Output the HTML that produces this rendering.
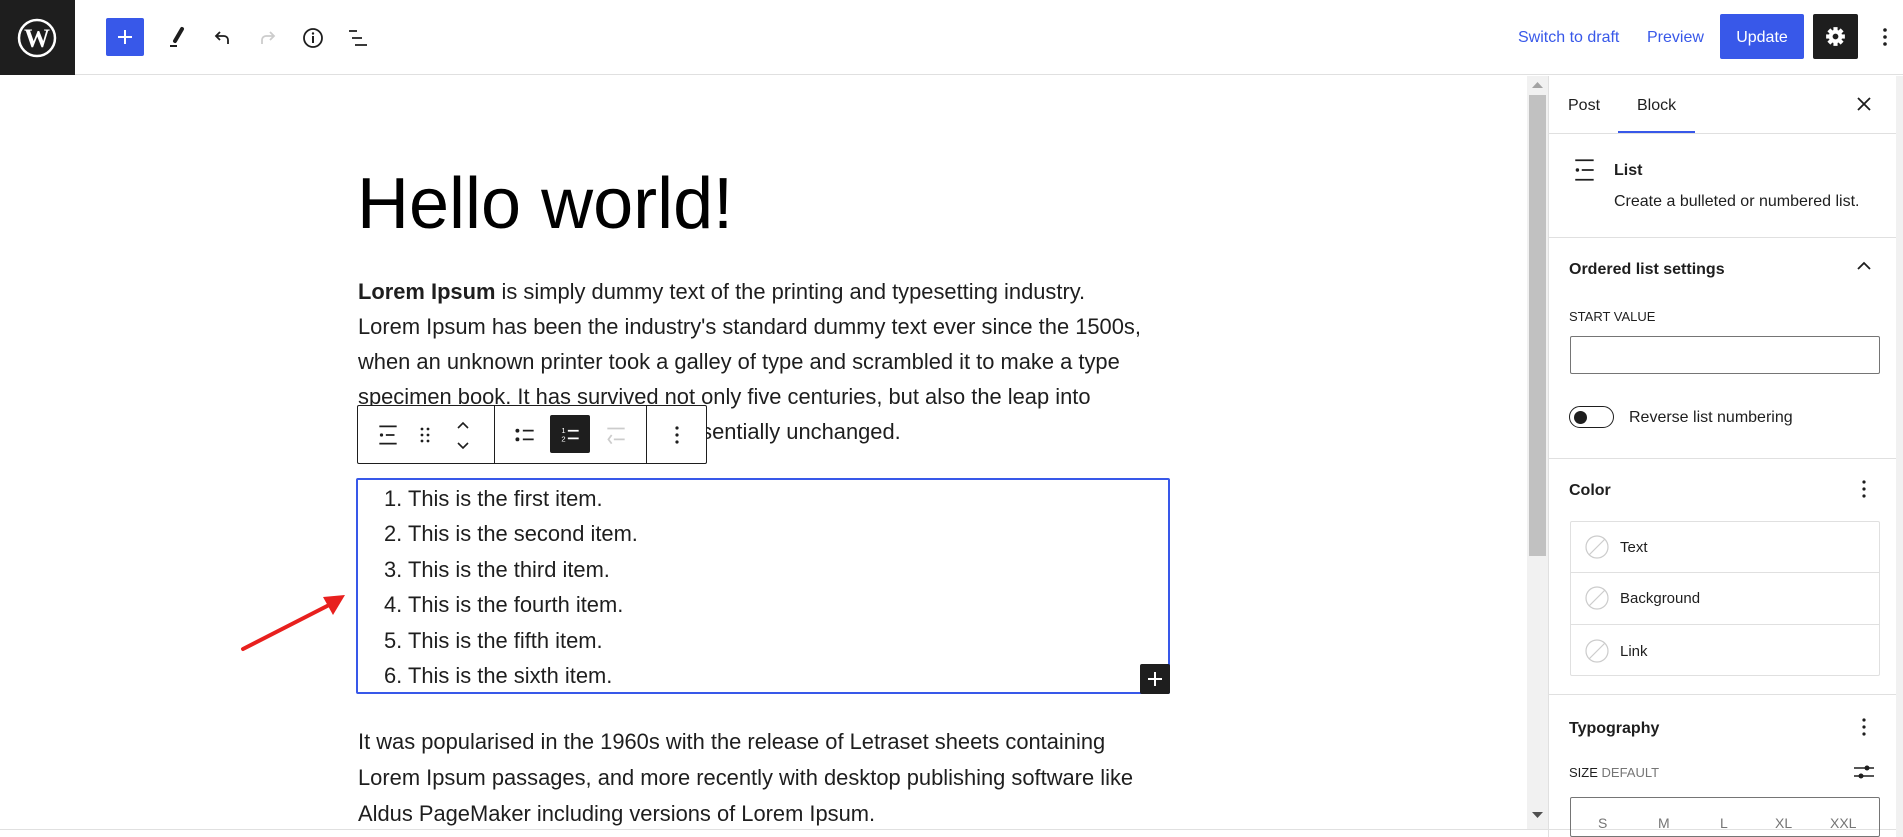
<!DOCTYPE html>
<html><head><meta charset="utf-8"><style>
*{margin:0;padding:0;box-sizing:border-box}
body{width:1903px;height:837px;overflow:hidden;background:#fff;font-family:"Liberation Sans",sans-serif;color:#1e1e1e;position:relative}
.a{position:absolute;white-space:nowrap}
.p{font-size:21.9px;line-height:35px;color:#1e1e1e}
.sb{font-size:16px}
</style></head><body>
<!-- header -->
<div class="a" style="left:0;top:0;width:1903px;height:75px;border-bottom:1px solid #e0e0e0"></div>
<div class="a" style="left:0;top:0;width:75px;height:75px;background:#1e1e1e"></div>
<svg class="a" style="left:17px;top:18px" width="40" height="40" viewBox="0 0 40 40"><circle cx="20" cy="20" r="18" fill="none" stroke="#fff" stroke-width="2.5"/><text x="20" y="29" text-anchor="middle" font-family="Liberation Serif" font-weight="bold" font-size="26" fill="#fff">W</text></svg>
<div class="a" style="left:106px;top:18px;width:38px;height:38px;background:#3858e9;border-radius:2px"></div>
<svg class="a" style="left:113px;top:25px" width="24" height="24" viewBox="0 0 24 24"><path d="M12 5v14M5 12h14" stroke="#fff" stroke-width="2"/></svg>
<svg class="a" style="left:165px;top:26px" width="24" height="24" viewBox="0 0 24 24"><path d="M17 3L10 15" stroke="#1e1e1e" stroke-width="4" stroke-linecap="round"/><path d="M5 20h7" stroke="#1e1e1e" stroke-width="2"/></svg>
<svg class="a" style="left:210px;top:26px" width="24" height="24" viewBox="0 0 24 24"><path d="M18 18v-4a4 4 0 0 0-4-4H6M10 6L6 10l4 4" fill="none" stroke="#1e1e1e" stroke-width="1.8"/></svg>
<svg class="a" style="left:256px;top:26px" width="24" height="24" viewBox="0 0 24 24"><path d="M6 18v-4a4 4 0 0 1 4-4h8M14 6l4 4-4 4" fill="none" stroke="#ccc" stroke-width="1.8"/></svg>
<svg class="a" style="left:301px;top:26px" width="24" height="24" viewBox="0 0 24 24"><circle cx="12" cy="12" r="9" fill="none" stroke="#1e1e1e" stroke-width="1.8"/><path d="M12 10v7" stroke="#1e1e1e" stroke-width="2"/><circle cx="12" cy="7.5" r="1.2" fill="#1e1e1e"/></svg>
<svg class="a" style="left:346px;top:26px" width="24" height="24" viewBox="0 0 24 24"><path d="M3 5h8M6 12h10M9 19h12" stroke="#1e1e1e" stroke-width="1.8"/></svg>
<div class="a" style="left:1518px;top:29px;font-size:16px;color:#3858e9">Switch to draft</div>
<div class="a" style="left:1647px;top:29px;font-size:16px;color:#3858e9">Preview</div>
<div class="a" style="left:1720px;top:14px;width:84px;height:45px;background:#3858e9;border-radius:2px;color:#fff;font-size:16px;text-align:center;line-height:47px">Update</div>
<div class="a" style="left:1813px;top:14px;width:45px;height:45px;background:#1e1e1e;border-radius:2px"></div>
<svg class="a" style="left:1823px;top:24px" width="25" height="25" viewBox="0 0 24 24"><g fill="#fff"><circle cx="12" cy="12" r="6.5"/><rect x="10" y="3" width="4" height="18"/><rect x="3" y="10" width="18" height="4"/><rect x="10" y="3" width="4" height="18" transform="rotate(45 12 12)"/><rect x="10" y="3" width="4" height="18" transform="rotate(-45 12 12)"/></g><circle cx="12" cy="12" r="2.8" fill="#1e1e1e"/></svg>
<svg class="a" style="left:1875px;top:25px" width="20" height="24" viewBox="0 0 20 24"><g fill="#1e1e1e"><circle cx="10" cy="5" r="1.8"/><circle cx="10" cy="12" r="1.8"/><circle cx="10" cy="19" r="1.8"/></g></svg>

<!-- editor -->
<div class="a" style="left:357px;top:161px;font-size:72px;line-height:86px;color:#000">Hello world!</div>
<div class="a p" style="left:358px;top:274px"><b>Lorem Ipsum</b> is simply dummy text of the printing and typesetting industry.</div>
<div class="a p" style="left:358px;top:309px">Lorem Ipsum has been the industry's standard dummy text ever since the 1500s,</div>
<div class="a p" style="left:358px;top:344px">when an unknown printer took a galley of type and scrambled it to make a type</div>
<div class="a p" style="left:358px;top:379px">specimen book. It has survived not only five centuries, but also the leap into</div>
<div class="a p" style="left:358px;top:414px">electronic typesetting, remaining essentially unchanged.</div>
<!-- toolbar -->
<div class="a" style="left:357px;top:405px;width:350px;height:59px;background:#fff;border:1px solid #1e1e1e;border-radius:2px"></div>
<div class="a" style="left:494px;top:406px;width:1px;height:57px;background:#1e1e1e"></div>
<div class="a" style="left:646px;top:406px;width:1px;height:57px;background:#1e1e1e"></div>
<svg class="a" style="left:375px;top:422px" width="26" height="26" viewBox="0 0 24 24"><path d="M4 4h16M10 12h8M4 20h16" stroke="#1e1e1e" stroke-width="1.6"/><circle cx="6" cy="12" r="1.5" fill="#1e1e1e"/></svg>
<svg class="a" style="left:415px;top:422px" width="20" height="26" viewBox="0 0 20 26"><g fill="#1e1e1e"><circle cx="7" cy="7" r="1.4"/><circle cx="13" cy="7" r="1.4"/><circle cx="7" cy="13" r="1.4"/><circle cx="13" cy="13" r="1.4"/><circle cx="7" cy="19" r="1.4"/><circle cx="13" cy="19" r="1.4"/></g></svg>
<svg class="a" style="left:452px;top:418px" width="22" height="34" viewBox="0 0 22 34"><path d="M6 10l5-5 5 5M6 25l5 5 5-5" fill="none" stroke="#1e1e1e" stroke-width="1.6"/></svg>
<svg class="a" style="left:512px;top:422px" width="26" height="26" viewBox="0 0 24 24"><circle cx="5" cy="8" r="1.8" fill="#1e1e1e"/><circle cx="5" cy="16" r="1.8" fill="#1e1e1e"/><path d="M10 8h10M10 16h10" stroke="#1e1e1e" stroke-width="1.6"/></svg>
<div class="a" style="left:550px;top:415px;width:40px;height:38px;background:#1e1e1e;border-radius:2px"></div>
<svg class="a" style="left:557px;top:421px" width="26" height="26" viewBox="0 0 24 24"><text x="4" y="11" font-size="7" fill="#fff" font-family="Liberation Sans">1</text><text x="4" y="19" font-size="7" fill="#fff" font-family="Liberation Sans">2</text><path d="M10 9h10M10 16h10" stroke="#fff" stroke-width="1.6"/></svg>
<svg class="a" style="left:603px;top:422px" width="26" height="26" viewBox="0 0 24 24"><path d="M4 6h16M10 16h10M8 12l-3 4 3 4" fill="none" stroke="#ccc" stroke-width="1.6"/></svg>
<svg class="a" style="left:667px;top:422px" width="20" height="26" viewBox="0 0 20 26"><g fill="#1e1e1e"><circle cx="10" cy="6" r="1.6"/><circle cx="10" cy="13" r="1.6"/><circle cx="10" cy="20" r="1.6"/></g></svg>
<!-- list -->
<div class="a" style="left:356px;top:478px;width:814px;height:216px;border:2px solid #3858e9;border-radius:2px"></div>
<div class="a p" style="left:384px;top:481px">1. This is the first item.</div>
<div class="a p" style="left:384px;top:516px">2. This is the second item.</div>
<div class="a p" style="left:384px;top:552px">3. This is the third item.</div>
<div class="a p" style="left:384px;top:587px">4. This is the fourth item.</div>
<div class="a p" style="left:384px;top:623px">5. This is the fifth item.</div>
<div class="a p" style="left:384px;top:658px">6. This is the sixth item.</div>
<div class="a" style="left:1140px;top:664px;width:30px;height:30px;background:#1e1e1e;border-radius:2px"></div>
<svg class="a" style="left:1145px;top:669px" width="20" height="20" viewBox="0 0 20 20"><path d="M10 3v14M3 10h14" stroke="#fff" stroke-width="2"/></svg>
<svg class="a" style="left:235px;top:585px" width="120" height="75" viewBox="0 0 120 75"><path d="M8 64L98 18" stroke="#e8201e" stroke-width="4" stroke-linecap="round"/><path d="M110 10L88 12 98 30z" fill="#e8201e"/></svg>
<div class="a p" style="left:358px;top:724px">It was popularised in the 1960s with the release of Letraset sheets containing</div>
<div class="a p" style="left:358px;top:760px">Lorem Ipsum passages, and more recently with desktop publishing software like</div>
<div class="a p" style="left:358px;top:796px">Aldus PageMaker including versions of Lorem Ipsum.</div>

<!-- scrollbar -->
<div class="a" style="left:1527px;top:76px;width:21px;height:753px;background:#f1f1f1"></div>
<div class="a" style="left:1529px;top:95px;width:17px;height:461px;background:#c1c1c1"></div>
<svg class="a" style="left:1532px;top:82px" width="11" height="7"><path d="M0 6L5.5 0 11 6z" fill="#a3a3a3"/></svg>
<svg class="a" style="left:1532px;top:812px" width="11" height="7"><path d="M0 0L5.5 6 11 0z" fill="#505050"/></svg>
<div class="a" style="left:0;top:829px;width:1903px;height:1px;background:#e0e0e0"></div>

<!-- sidebar -->
<div class="a" style="left:1548px;top:76px;width:1px;height:761px;background:#e0e0e0"></div>
<div class="a" style="left:1896px;top:76px;width:7px;height:761px;background:#f1f1f1"></div>
<div class="a sb" style="left:1568px;top:97px;font-weight:500">Post</div>
<div class="a sb" style="left:1637px;top:97px">Block</div>
<div class="a" style="left:1618px;top:131px;width:77px;height:3px;background:#3858e9"></div>
<div class="a" style="left:1549px;top:133px;width:347px;height:1px;background:#e0e0e0"></div>
<svg class="a" style="left:1855px;top:95px" width="18" height="18" viewBox="0 0 18 18"><path d="M3 3l12 12M15 3L3 15" stroke="#1e1e1e" stroke-width="1.8"/></svg>
<svg class="a" style="left:1572px;top:157px" width="26" height="26" viewBox="0 0 24 24"><path d="M3 3h17M9 12h11M3 21h17" stroke="#1e1e1e" stroke-width="1.6"/><circle cx="5" cy="12" r="1.6" fill="#1e1e1e"/></svg>
<div class="a sb" style="left:1614px;top:162px;font-weight:bold">List</div>
<div class="a sb" style="left:1614px;top:193px">Create a bulleted or numbered list.</div>
<div class="a" style="left:1549px;top:237px;width:347px;height:1px;background:#e0e0e0"></div>
<div class="a sb" style="left:1569px;top:261px;font-weight:bold">Ordered list settings</div>
<svg class="a" style="left:1856px;top:260px" width="16" height="12"><path d="M2 9l6-6 6 6" fill="none" stroke="#1e1e1e" stroke-width="1.8"/></svg>
<div class="a" style="left:1569px;top:309px;font-size:13px;font-weight:500">START VALUE</div>
<div class="a" style="left:1570px;top:336px;width:310px;height:38px;border:1px solid #757575;border-radius:2px"></div>
<div class="a" style="left:1569px;top:406px;width:45px;height:22px;border:1.5px solid #1e1e1e;border-radius:11px"></div>
<div class="a" style="left:1574px;top:411px;width:13px;height:13px;background:#1e1e1e;border-radius:50%"></div>
<div class="a sb" style="left:1629px;top:409px">Reverse list numbering</div>
<div class="a" style="left:1549px;top:458px;width:347px;height:1px;background:#e0e0e0"></div>
<div class="a sb" style="left:1569px;top:482px;font-weight:bold">Color</div>
<svg class="a" style="left:1855px;top:478px" width="18" height="22"><g fill="#1e1e1e"><circle cx="9" cy="4" r="1.6"/><circle cx="9" cy="11" r="1.6"/><circle cx="9" cy="18" r="1.6"/></g></svg>
<div class="a" style="left:1570px;top:521px;width:310px;height:155px;border:1px solid #e0e0e0;border-radius:2px"></div>
<div class="a" style="left:1571px;top:572px;width:308px;height:1px;background:#e0e0e0"></div>
<div class="a" style="left:1571px;top:624px;width:308px;height:1px;background:#e0e0e0"></div>
<svg class="a" style="left:1585px;top:535px" width="25" height="130" viewBox="0 0 25 130"><g fill="none" stroke="#ccc" stroke-width="1.2"><circle cx="12" cy="12" r="11"/><path d="M4 20L20 4"/><circle cx="12" cy="63" r="11"/><path d="M4 71L20 55"/><circle cx="12" cy="116" r="11"/><path d="M4 124L20 108"/></g></svg>
<div class="a sb" style="left:1620px;top:539px;font-size:15px">Text</div>
<div class="a sb" style="left:1620px;top:590px;font-size:15px">Background</div>
<div class="a sb" style="left:1620px;top:643px;font-size:15px">Link</div>
<div class="a" style="left:1549px;top:694px;width:347px;height:1px;background:#e0e0e0"></div>
<div class="a sb" style="left:1569px;top:720px;font-weight:bold">Typography</div>
<svg class="a" style="left:1855px;top:716px" width="18" height="22"><g fill="#1e1e1e"><circle cx="9" cy="4" r="1.6"/><circle cx="9" cy="11" r="1.6"/><circle cx="9" cy="18" r="1.6"/></g></svg>
<div class="a" style="left:1569px;top:765px;font-size:13px;font-weight:500">SIZE <span style="color:#757575;font-weight:normal">DEFAULT</span></div>
<svg class="a" style="left:1853px;top:762px" width="22" height="20" viewBox="0 0 22 20"><path d="M1 6h20M1 14h20" stroke="#1e1e1e" stroke-width="1.6"/><circle cx="14" cy="6" r="2.5" fill="#1e1e1e"/><circle cx="8" cy="14" r="2.5" fill="#1e1e1e"/></svg>
<div class="a" style="left:1570px;top:797px;width:310px;height:40px;border:1px solid #757575;border-radius:2px"></div>
<div class="a" style="left:1598px;top:815px;font-size:14px;color:#757575">S</div>
<div class="a" style="left:1658px;top:815px;font-size:14px;color:#757575">M</div>
<div class="a" style="left:1720px;top:815px;font-size:14px;color:#757575">L</div>
<div class="a" style="left:1775px;top:815px;font-size:14px;color:#757575">XL</div>
<div class="a" style="left:1830px;top:815px;font-size:14px;color:#757575">XXL</div>
</body></html>
